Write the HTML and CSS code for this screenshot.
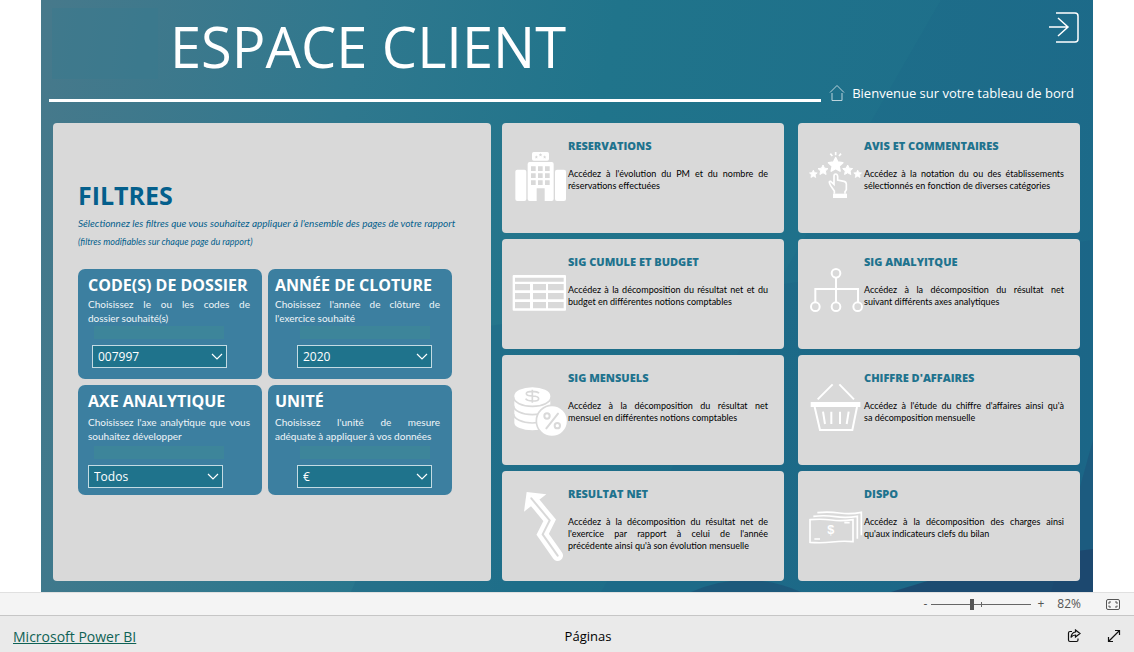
FILE: index.html
```
<!DOCTYPE html>
<html lang="fr">
<head>
<meta charset="utf-8">
<title>Espace client</title>
<link rel="stylesheet" href="styles.css">
</head>
<body>
<svg class="defs" aria-hidden="true">
  <symbol id="star" viewBox="-12 -12 24 24"><path d="M0-10 3-3.6 10-2.8 4.8 2 6.2 9 0 5.5-6.2 9-4.8 2-10-2.8-3-3.6Z" stroke-width="2" stroke-linejoin="round"/></symbol>
</svg>
<main class="report">
  <svg class="backdrop" viewBox="0 0 1052 592" preserveAspectRatio="none" aria-hidden="true">
    <path d="M900 0H1052V592H560Z" fill="#1b5f85" opacity=".15"/>
    <path d="M310 592 420 330 1052 240V592Z" fill="#1b5880" opacity=".2"/>
    <path d="M1052 440 1010 592H1052Z" fill="#1d4a72" opacity=".4"/>
    <path d="M650 592Q705 568 760 592Z" fill="#1d4068" opacity=".4"/>
    <path d="M850 592Q950 560 1052 549V592Z" fill="#1d4068" opacity=".7"/>
    <path d="M11 8H117V79H11Z" fill="#367a8e" opacity=".4"/>
  </svg>
  <header class="head">
    <div class="head-top">
      <h1>ESPACE CLIENT</h1>
      <button class="exit" aria-label="Quitter">
        <svg width="32" height="32" viewBox="0 0 32 32"><path d="M8 2H27Q30 2 30 5V28Q30 31 27 31H8M1 16H20M10 7 20 16 10 25"/></svg>
      </button>
    </div>
    <div class="head-line">
      <span class="rule"></span>
      <svg class="home" width="16" height="18" viewBox="0 0 16 18"><path d="M1 8.500 8 1.500 15 8.500M3 9V16.500H13V9"/></svg>
      <p>Bienvenue sur votre tableau de bord</p>
    </div>
  </header>

  <div class="content">
    <section class="panel">
      <h2>FILTRES</h2>
      <p class="hint">Sélectionnez les filtres que vous souhaitez appliquer à l'ensemble des pages de votre rapport</p>
      <p class="hint small">(filtres modifiables sur chaque page du rapport)</p>
      <div class="filters">
        <div class="filter">
          <h3><label for="code">CODE(S) DE DOSSIER</label></h3>
          <p>Choisissez le ou les codes de dossier&nbsp;souhaité(s)</p>
          <span class="strip"></span>
          <select id="code"><option>007997</option></select>
        </div>
        <div class="filter shifted">
          <h3><label for="year">ANNÉE DE CLOTURE</label></h3>
          <p>Choisissez l'année de clôture de l'exercice&nbsp;souhaité</p>
          <span class="strip"></span>
          <select id="year"><option>2020</option></select>
        </div>
        <div class="filter low">
          <h3><label for="axis">AXE ANALYTIQUE</label></h3>
          <p>Choisissez l'axe analytique que vous souhaitez développer</p>
          <span class="strip"></span>
          <select id="axis"><option>Todos</option></select>
        </div>
        <div class="filter low shifted">
          <h3><label for="unit">UNITÉ</label></h3>
          <p>Choisissez l'unité de mesure adéquate&nbsp;à appliquer à vos données</p>
          <span class="strip"></span>
          <select id="unit"><option>€</option></select>
        </div>
      </div>
    </section>

    <section class="cards">
      <article class="card">
        <svg class="icon" viewBox="0 0 168 330">
          <g fill="#fff"><rect x="10" y="140" width="33" height="94" rx="6"/><rect x="129" y="140" width="33" height="94" rx="6"/><rect x="47" y="117" width="78" height="117" rx="6"/><rect x="60" y="87" width="51" height="26" rx="5"/></g>
          <g fill="#d9d9d9"><path d="M57 130h14v14h-14zM78 130h14v14h-14zM99 130h14v14h-14zM57 151h14v14h-14zM78 151h14v14h-14zM99 151h14v14h-14zM57 172h14v14h-14zM78 172h14v14h-14zM99 172h14v14h-14zM74 196h24v39h-24z"/>
          <use href="#star" x="67" y="96" width="12" height="12"/><use href="#star" x="79" y="89" width="13" height="13"/><use href="#star" x="92" y="96" width="12" height="12"/></g>
        </svg>
        <div class="text"><h3>RESERVATIONS</h3><p>Accédez à l'évolution du PM et du nombre de réservations effectuées</p></div>
      </article>
      <article class="card">
        <svg class="icon" viewBox="0 0 168 330">
          <g fill="#fff" stroke="#fff"><use href="#star" x="57" y="99" width="52" height="52"/><use href="#star" x="27" y="123" width="36" height="36"/><use href="#star" x="101" y="123" width="36" height="36"/><use href="#star" x="2" y="139" width="28" height="28"/><use href="#star" x="135" y="139" width="28" height="28"/></g>
          <rect x="75" y="212" width="42" height="13" fill="#fff"/>
          <path class="line" stroke-width="5" d="M83 87V97M67 92 73 99M99 92 93 99M79 212V204L68 188Q60 174 68 175L78 184V160Q78 153 83 153T89 160V171L108 175Q115 177 115 184V200L111 206V212"/>
        </svg>
        <div class="text"><h3>AVIS ET COMMENTAIRES</h3><p>Accédez à la notation du ou des établissements sélectionnés en fonction de diverses catégories</p></div>
      </article>
      <article class="card">
        <svg class="icon" viewBox="0 0 168 330">
          <rect x="2" y="108" width="160" height="107" rx="3" fill="#fff"/>
          <path fill="#d9d9d9" d="M9 116h146v12H9zM9 135h45v19H9zM63 135h39v19H63zM108 135h47v19h-47zM9 162h45v19H9zM63 162h39v19H63zM108 162h47v19h-47zM9 189h45v19H9zM63 189h39v19H63zM108 189h47v19h-47z"/>
        </svg>
        <div class="text"><h3>SIG CUMULE ET BUDGET</h3><p>Accédez à la décomposition du résultat net et du budget en différentes notions comptables</p></div>
      </article>
      <article class="card">
        <svg class="icon" viewBox="0 0 168 330">
          <g class="line" stroke-width="6"><circle cx="84" cy="103" r="13"/><circle cx="22" cy="203" r="13"/><circle cx="84" cy="203" r="13"/><circle cx="149" cy="203" r="13"/><path d="M84 116V190M22 190V150H150V190"/></g>
        </svg>
        <div class="text"><h3>SIG ANALYITQUE</h3><p>Accédez à la décomposition du résultat net suivant&nbsp;différents axes analytiques</p></div>
      </article>
      <article class="card">
        <svg class="icon" viewBox="0 0 168 330">
          <path fill="#fff" d="M7 123A54 26 0 0 1 115 123V203A54 23 0 0 1 7 203Z"/>
          <path fill="none" stroke="#d9d9d9" stroke-width="5" d="M5 127A56 27 0 0 0 117 127M5 152A56 27 0 0 0 117 152M5 177A56 27 0 0 0 117 177"/>
          <path fill="none" stroke="#d9d9d9" stroke-width="5" d="M81 115Q76 109 61 109 43 109 43 116 43 122 61 123 80 124 80 131 80 138 61 138 45 138 41 131M61 104V143"/>
          <circle cx="120" cy="198" r="47" fill="#fff" stroke="#d9d9d9" stroke-width="5"/>
          <g fill="none" stroke="#d9d9d9" stroke-width="6" stroke-linecap="round"><path d="M138 176 103 220"/><circle cx="105" cy="183" r="8"/><circle cx="136" cy="212" r="8"/></g>
        </svg>
        <div class="text"><h3>SIG MENSUELS</h3><p>Accédez à la décomposition du résultat net mensuel en différentes notions comptables</p></div>
      </article>
      <article class="card">
        <svg class="icon" viewBox="0 0 168 330">
          <path class="line" stroke-width="6" d="M29 133 74 88M94 88 138 133M20 156 36 225H133L147 156M45 170 51 207M70 170V207M96 170V207M122 170 116 207"/>
          <rect x="8" y="141" width="149" height="15" fill="#fff"/>
        </svg>
        <div class="text"><h3>CHIFFRE D'AFFAIRES</h3><p>Accédez à l'étude du chiffre d'affaires ainsi qu'à sa&nbsp;décomposition mensuelle</p></div>
      </article>
      <article class="card">
        <svg class="icon" viewBox="0 0 168 330">
          <path fill="none" stroke="#fff" stroke-width="32" stroke-linejoin="miter" stroke-linecap="round" d="M70 96 113 148 92 190 137 254"/>
          <path fill="#fff" d="M44 63 103 70 36 122Z"/>
          <path fill="none" stroke="#d9d9d9" stroke-width="6" stroke-linecap="round" d="M58 82 113 148 92 190 137 254"/>
        </svg>
        <div class="text"><h3>RESULTAT NET</h3><p>Accédez à la décomposition du résultat net de l'exercice par rapport à celui de l'année précédente&nbsp;ainsi qu'à son évolution mensuelle</p></div>
      </article>
      <article class="card">
        <svg class="icon" viewBox="0 0 168 330">
          <path class="line" stroke-width="5" d="M6 146Q40 143 70 147T135 146V212Q105 209 72 213T6 214ZM16 136Q50 132 82 137T148 136V203M28 125Q60 121 94 126T160 124V193M109 155H125M19 204H36"/>
          <text x="68" y="190" font-size="38" font-weight="700" fill="#fff" text-anchor="middle" class="glyph">$</text>
        </svg>
        <div class="text"><h3>DISPO</h3><p>Accédez à la décomposition des charges ainsi qu'aux indicateurs clefs du bilan</p></div>
      </article>
    </section>
  </div>
</main>

<div class="zoombar">
  <button aria-label="Réduire">-</button>
  <input type="range" min="0" max="100" value="40" aria-label="Zoom">
  <button aria-label="Agrandir">+</button>
  <output>82%</output>
  <button class="fit" aria-label="Ajuster à la page">
    <svg width="14" height="11" viewBox="0 0 14 11"><rect x=".5" y=".5" width="13" height="10" rx="1.500"/><path d="M5 3H3V5M9 3H11V5M5 8H3V6.500M9 8H11V6.500"/></svg>
  </button>
</div>
<footer class="foot">
  <a href="#">Microsoft Power BI</a>
  <span>Páginas</span>
  <div class="tools">
    <button aria-label="Partager"><svg width="14" height="14" viewBox="0 0 14 14"><path d="M5 2.500H3Q1.500 2.500 1.500 4V11Q1.500 12.500 3 12.500H9.500Q11 12.500 11 11V9.500M8.500 1 13 4.500 8.500 8V6Q5.500 6 4 8.500 4.500 3.500 8.500 3Z"/></svg></button>
    <button aria-label="Plein écran"><svg width="14" height="14" viewBox="0 0 14 14"><path d="M1.500 12.500 12.500 1.500M8 1.500H12.500V6M1.500 8V12.500H6"/></svg></button>
  </div>
</footer>
</body>
</html>
```
FILE: styles.css
```
* { box-sizing: border-box; }
body { margin: 0; background: #fff; font-family: "Open Sans", sans-serif; }
h1, h2, h3, p { margin: 0; }
button { border: 0; padding: 0; background: none; font: inherit; color: inherit; cursor: pointer; }
svg { display: block; }
.defs { position: absolute; width: 0; height: 0; }

.report {
  position: relative;
  margin: 0 41px;
  padding: 0 13px 11px 12px;
  background: linear-gradient(100deg, #47798b 0%, #2f788e 28%, #20748b 50%, #1d6c8a 100%);
}
.backdrop { position: absolute; inset: 0; width: 100%; height: 100%; }
.head, .content { position: relative; color: #fff; }
.head { padding-bottom: 21px; }
.head-top { display: flex; justify-content: space-between; padding-left: 117px; }
.head-top h1 { padding-top: 8px; font-size: 56px; font-weight: 400; line-height: 76px; white-space: nowrap; }
.exit { align-self: flex-start; margin-top: 11px; }
.exit svg, .home { fill: none; stroke: #fff; }
.exit svg { stroke-width: 1.500; }
.head-line { display: flex; align-items: center; height: 18px; margin-left: -4px; padding-right: 6px; }
.head-line .rule { flex: 1; height: 3px; background: #fff; align-self: flex-end; margin-right: 8px; }
.head-line .home { stroke-width: 1; opacity: .7; margin-right: 7px; }
.head-line p { font-size: 13px; line-height: 18px; }

.content { display: grid; grid-template-columns: 438fr 578fr; gap: 11px; }
.panel { min-width: 0; background: #d9d9d9; border-radius: 4px; padding: 54px 39px 0 25px; color: #045f8c; }
.panel h2 { font-size: 25px; font-weight: 700; line-height: 36px; }
.hint { font: italic 400 10px/20px Lato, sans-serif; white-space: nowrap; }
.hint.small { font-size: 9px; line-height: 18px; }
.filters { display: grid; grid-template-columns: 1fr 1fr; gap: 6px; margin-top: 18px; }
.filter { display: flex; flex-direction: column; height: 110px; padding: 5px 12px 6px 10px; background: #3c7fa0; border-radius: 7px; color: #fff; }
.filter h3 { font-size: 16px; font-weight: 700; line-height: 23px; white-space: nowrap; }
.filter p { font: 400 10px/14px Lato, sans-serif; text-align: justify; color: #f0f5f8; }
.filter .strip { flex: none; width: 130px; height: 13px; margin: 1px 0 6px 6px; background: #3d859a; }
.filter select {
  flex: none; width: 135px; height: 23px; margin-left: 4px; padding: 0 5px;
  appearance: none; border: 1px solid #c4dbe3; border-radius: 0; color: #fff;
  font: 400 12px/18px "Open Sans", sans-serif;
  background: #1f738c url("data:image/svg+xml,%3Csvg xmlns='http://www.w3.org/2000/svg' width='12' height='8'%3E%3Cpath d='M1 1l5 5 5-5' fill='none' stroke='white' stroke-width='1.200'/%3E%3C/svg%3E") no-repeat right 3px center;
}
.filter.shifted { padding-left: 7px; }
.filter.shifted .strip { margin-left: 25px; }
.filter.shifted select { margin-left: 22px; }
.filter.low p { margin-top: 2px; }
.filter.low .strip { margin-top: 3px; }
.filter.low:not(.shifted) select { margin-left: 0; }

.cards { min-width: 0; display: grid; grid-template-columns: 1fr 1fr; gap: 6px 14px; }
.card { display: flex; height: 110px; padding: 0 16px 0 10px; background: #d9d9d9; border-radius: 4px; color: #000; }
.icon { flex: none; width: 56px; height: 110px; }
.icon .line { fill: none; stroke: #fff; }
.glyph { font-family: "Liberation Sans", sans-serif; }
.text { flex: 1; min-width: 0; padding-top: 16px; }
.text h3 { font-size: 11px; font-weight: 800; line-height: 14px; color: #1f738e; white-space: nowrap; }
.text p { margin-top: 15px; font: 400 9px/12px Lato, sans-serif; text-align: justify; }

.zoombar { display: flex; align-items: center; justify-content: flex-end; height: 24px; padding-right: 14px; background: #f4f4f4; border-top: 1px solid #e0e0e0; border-bottom: 1px solid #c6c6c6; color: #555; font-size: 12px; line-height: 20px; }
.zoombar input {
  appearance: none; width: 100px; height: 12px; margin: 0 6px 0 4px;
  background: linear-gradient(#666, #666) 50px 50% / 1px 5px no-repeat, linear-gradient(#666, #666) 0 50% / 100% 1px no-repeat;
}
.zoombar input::-webkit-slider-thumb { appearance: none; width: 4px; height: 11px; background: #555; }
.zoombar output { margin-left: 13px; }
.zoombar .fit { margin-left: 25px; }
.fit svg { fill: none; stroke: #555; }
.foot { display: grid; grid-template-columns: 1fr auto 1fr; align-items: center; height: 36px; padding: 4px 13px 0; background: #eaeaea; color: #000; font-size: 13px; }
.foot a { color: #0f6255; justify-self: start; font-size: 14px; }
.foot span { padding-left: 42px; }
.tools { display: flex; gap: 26px; justify-self: end; }
.tools svg { fill: none; stroke: #111; stroke-width: 1.200; }
```
